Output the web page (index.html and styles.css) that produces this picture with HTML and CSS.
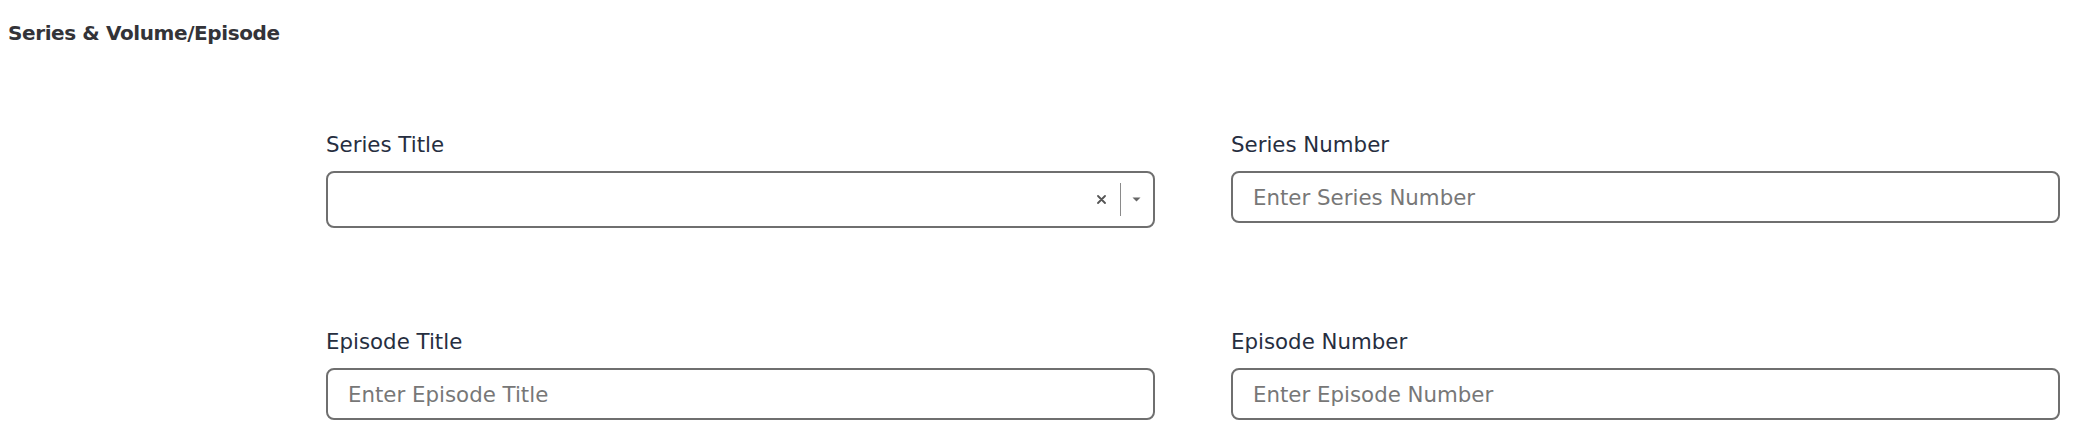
FILE: index.html
```html
<!DOCTYPE html>
<html lang="en">
<head>
<meta charset="utf-8">
<title>Series &amp; Volume/Episode</title>
<link rel="stylesheet" href="styles.css">
</head>
<body>
<section class="section">
  <h2 class="section-title">Series &amp; Volume/Episode</h2>
  <div class="form-grid">
    <div class="field">
      <label class="field-label">Series Title</label>
      <div class="select">
        <div class="select-value"></div>
        <div class="select-indicators">
          <svg class="clear-icon" width="9" height="9" viewBox="0 0 9 9" aria-hidden="true">
            <path d="M1 1 L8 8 M8 1 L1 8" stroke="#555" stroke-width="1.8" stroke-linecap="round" fill="none"/>
          </svg>
          <span class="select-sep"></span>
          <svg class="caret-icon" width="9" height="5" viewBox="0 0 9 5" aria-hidden="true">
            <path d="M0.5 0.5 L8.5 0.5 L4.5 4.5 Z" fill="#666"/>
          </svg>
        </div>
      </div>
    </div>
    <div class="field">
      <label class="field-label">Series Number</label>
      <input class="text-input" type="text" placeholder="Enter Series Number">
    </div>
    <div class="field">
      <label class="field-label">Episode Title</label>
      <input class="text-input" type="text" placeholder="Enter Episode Title">
    </div>
    <div class="field">
      <label class="field-label">Episode Number</label>
      <input class="text-input" type="text" placeholder="Enter Episode Number">
    </div>
  </div>
</section>
</body>
</html>
```
FILE: styles.css
```css
* { box-sizing: border-box; }

html, body {
  margin: 0;
  padding: 0;
  background: #ffffff;
}

body {
  font-family: "DejaVu Sans", "Liberation Sans", sans-serif;
}

.section {
  width: 2086px;
}

.section-title {
  margin: 17px 0 0 8px;
  font-size: 20px;
  line-height: 32px;
  font-weight: 700;
  letter-spacing: -0.4px;
  color: #333338;
}

.form-grid {
  display: grid;
  grid-template-columns: 829px 829px;
  column-gap: 76px;
  row-gap: 98px;
  padding: 80px 0 0 326px;
  align-items: start;
}

.field {
  display: flex;
  flex-direction: column;
}

.field-label {
  font-size: 21.33px;
  line-height: 32px;
  color: #262e3f;
  margin-bottom: 10px;
}

.text-input {
  width: 100%;
  height: 52px;
  border: 2px solid #6f6f6f;
  border-radius: 8px;
  padding: 0 20px;
  font-family: "DejaVu Sans", "Liberation Sans", sans-serif;
  font-size: 21.33px;
  color: #333;
  background: #fff;
  outline: none;
}

.text-input::placeholder {
  color: #777777;
  opacity: 1;
}

.select {
  display: flex;
  align-items: center;
  height: 57px;
  border: 2px solid #6f6f6f;
  border-radius: 8px;
  padding-right: 12px;
  background: #fff;
}

.select-value {
  flex: 1;
}

.select-indicators {
  display: flex;
  align-items: center;
}

.clear-icon {
  display: block;
  margin-right: 14px;
}

.select-sep {
  display: block;
  width: 1px;
  height: 33px;
  background: #8a8a8a;
  margin-right: 11px;
}

.caret-icon {
  display: block;
}
```
